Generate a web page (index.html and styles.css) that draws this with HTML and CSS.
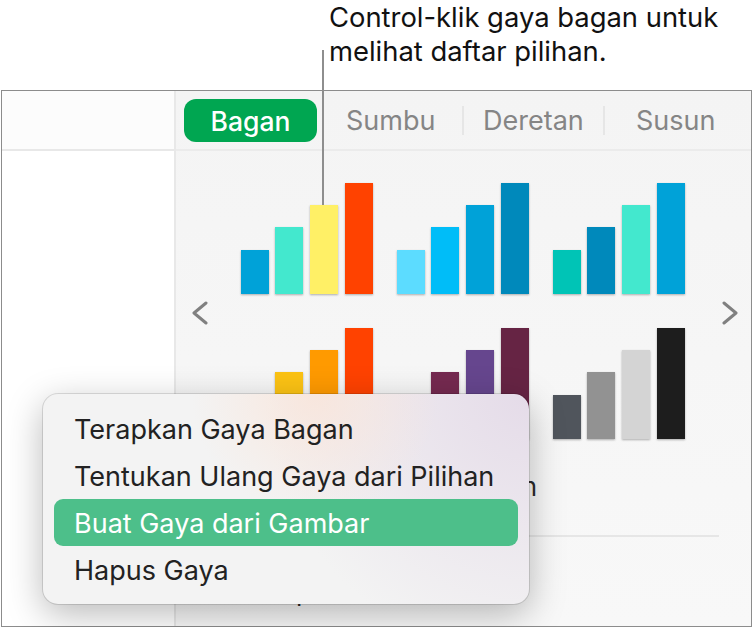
FILE: index.html
```html
<!DOCTYPE html>
<html lang="id">
<head>
<meta charset="utf-8">
<title>Gaya Bagan</title>
<link rel="stylesheet" href="styles.css">
</head>
<body>
<div class="page">
  <header class="callout">
    <p class="callout-text">Control-klik gaya bagan untuk<br>melihat daftar pilihan.</p>
  </header>
  <div class="leader"></div>
  <main class="frame">
    <aside class="sidebar">
      <div class="sidebar-top"></div>
    </aside>
    <section class="panel">
      <nav class="tabs">
        <span class="tab tab-active">Bagan</span>
        <span class="tab tab-sumbu">Sumbu</span>
        <span class="tab-sep"></span>
        <span class="tab tab-deretan">Deretan</span>
        <span class="tab-sep"></span>
        <span class="tab tab-susun">Susun</span>
      </nav>
      <div class="styles">
        <svg class="chev chev-left" width="16" height="24" viewBox="0 0 16 24"><path d="M14 2 L2 12 L14 22" fill="none" stroke="#808080" stroke-width="3" stroke-linecap="round" stroke-linejoin="round"/></svg>
        <div class="charts">
          <div class="chart"><i class="bar h1 c-blue"></i><i class="bar h2 c-aqua"></i><i class="bar h3 c-yellow"></i><i class="bar h4 c-red"></i></div>
          <div class="chart"><i class="bar h1 c-sky"></i><i class="bar h2 c-cyan"></i><i class="bar h3 c-blue"></i><i class="bar h4 c-deep"></i></div>
          <div class="chart"><i class="bar h1 c-teal"></i><i class="bar h2 c-deep"></i><i class="bar h3 c-aqua"></i><i class="bar h4 c-blue"></i></div>
          <div class="chart"><i class="bar h1 c-gold"></i><i class="bar h2 c-gold"></i><i class="bar h3 c-orange"></i><i class="bar h4 c-red"></i></div>
          <div class="chart"><i class="bar h1 c-wine"></i><i class="bar h2 c-wine"></i><i class="bar h3 c-purple"></i><i class="bar h4 c-plum"></i></div>
          <div class="chart"><i class="bar h1 c-slate"></i><i class="bar h2 c-grey"></i><i class="bar h3 c-light"></i><i class="bar h4 c-black"></i></div>
        </div>
        <svg class="chev chev-right" width="16" height="24" viewBox="0 0 16 24"><path d="M2 2 L14 12 L2 22" fill="none" stroke="#808080" stroke-width="3" stroke-linecap="round" stroke-linejoin="round"/></svg>
      </div>
      <div class="option-row">Judul dan Keterangan</div>
      <div class="divider"></div>
      <div class="option-below">Opsi</div>
    </section>
  </main>
  <ul class="menu">
    <li class="menu-item">Terapkan Gaya Bagan</li>
    <li class="menu-item">Tentukan Ulang Gaya dari Pilihan</li>
    <li class="menu-item menu-item-active">Buat Gaya dari Gambar</li>
    <li class="menu-item">Hapus Gaya</li>
  </ul>
</div>
</body>
</html>
```
FILE: styles.css
```css
* { box-sizing: border-box; }
html, body { margin: 0; padding: 0; background: #fff; }
body { font-family: Inter, "Liberation Sans", sans-serif; overflow: hidden; }
.page { position: relative; width: 753px; height: 627px; padding: 0 1px 0 1px; }

.callout { height: 90px; padding: 0 0 0 328px; }
.callout-text { margin: 0; font-size: 27.4px; line-height: 34px; color: #111; white-space: nowrap; }
.leader { position: absolute; left: 322px; top: 50px; width: 2px; height: 155px; background: #8e8e8e; z-index: 2; }

.frame { display: grid; grid-template-columns: 172px 1fr; height: 537px; border: 1px solid #8c8c8c; background: #fff; }
.sidebar { background: #fff; border-right: 0; }
.sidebar-top { height: 60px; background: #fcfcfc; border-bottom: 2px solid #e8e8e8; }

.panel { background: linear-gradient(#f4f4f4, #f8f8f8); border-left: 2px solid #e8e8e8; min-width: 0; }
.tabs { position: relative; display: flex; align-items: center; height: 60px; border-bottom: 2px solid #ebebeb; padding: 1px 0 0 8px; }
.tab { font-size: 27px; color: #858585; white-space: nowrap; line-height: 45px; }
.tab-active { width: 133px; height: 43px; line-height: 45px; text-align: center; color: #fff; font-size: 26.5px; font-weight: 500; background: #00a651; border-radius: 12px; }
.tab-sumbu { margin-left: 29px; width: 116px; }
.tab-sep { width: 2px; height: 29px; background: #e6e6e6; }
.tab-deretan { margin-left: 19px; width: 120px; }
.tab-susun { margin-left: 31px; }

.styles { display: grid; grid-template-columns: 65px 444px 66px; padding-top: 32px; }
.chev { align-self: center; margin-top: 4px; }
.chev-left { margin-left: 16px; }
.chev-right { margin-left: 37px; margin-top: 4px; }
.charts { display: grid; grid-template-columns: repeat(3, 132px); grid-auto-rows: 111px; column-gap: 24px; row-gap: 34px; }
.chart { display: flex; align-items: flex-end; }
.bar { display: block; width: 28px; margin-left: 7px; box-shadow: 0 1px 2px rgba(0,0,0,.3); }
.h1 { height: 44px; margin-left: 0; }
.h2 { height: 67px; margin-left: 6px; }
.h3 { height: 89px; }
.h4 { height: 111px; }

.c-blue { background: #00a2d8; }
.c-aqua { background: #43e8ce; }
.c-yellow { background: #fff066; }
.c-red { background: #ff4200; }
.c-sky { background: #5cdcff; }
.c-cyan { background: #00bdf8; }
.c-deep { background: #0089bb; }
.c-teal { background: #00c4b6; }
.c-gold { background: #fcc314; }
.c-orange { background: #ff9a00; }
.c-wine { background: #752a50; }
.c-purple { background: #66468e; }
.c-plum { background: #662444; }
.c-slate { background: #50555c; }
.c-grey { background: #929292; }
.c-light { background: #d4d4d4; }
.c-black { background: #1d1d1d; }

.option-row { margin: 31px 0 0; padding-right: 214px; text-align: right; font-size: 26px; line-height: 34px; color: #2a2a2a; }
.divider { height: 2px; margin: 31px 32px 0 22px; background: #e6e6e6; }
.option-below { margin-top: 38px; padding-left: 100px; font-size: 26px; line-height: 34px; color: #2a2a2a; }

.menu { position: absolute; left: 43px; top: 394px; width: 486px; height: 210px; margin: 0; padding: 11px 11px 10px; list-style: none; z-index: 3; border-radius: 15px;
  background:
    radial-gradient(circle at 56% 0%, rgba(250,228,216,.8), rgba(250,228,216,0) 36%),
    radial-gradient(circle at 100% 0%, rgba(228,218,232,.95), rgba(228,218,232,0) 50%),
    #f3f3f3;
  box-shadow: 0 0 0 1px rgba(0,0,0,.12), 0 10px 36px rgba(0,0,0,.28); }
.menu-item { height: 47px; padding: 1px 0 0 20px; font-size: 27px; line-height: 47px; color: #222; white-space: nowrap; border-radius: 9px; }
.menu-item-active { background: #4dbf8a; color: #fff; }
```
